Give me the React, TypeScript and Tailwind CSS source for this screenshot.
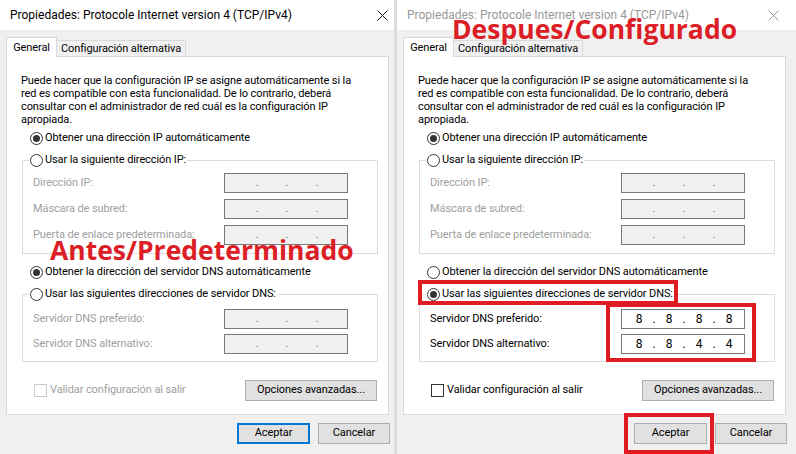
import React from "react";

type Variant = "before" | "after";

function Radio({ checked }: { checked: boolean }) {
  return (
    <span className="flex h-[13px] w-[13px] shrink-0 items-center justify-center rounded-full border border-[#333333] bg-white">
      {checked && <span className="h-[7px] w-[7px] rounded-full bg-[#333333]" />}
    </span>
  );
}

function RadioRow({ checked, label }: { checked: boolean; label: string }) {
  return (
    <span className="flex h-[16px] items-center gap-[2px] whitespace-nowrap text-black">
      <Radio checked={checked} />
      <span>{label}</span>
    </span>
  );
}

function IpField({ value, enabled }: { value?: string[]; enabled: boolean }) {
  return (
    <div
      className={
        enabled
          ? "flex h-[20px] w-[124px] shrink-0 items-center border border-[#7a7a7a] bg-white pl-[4px] text-[12px] text-black"
          : "flex h-[20px] w-[124px] shrink-0 items-center border border-[#7a7a7a] bg-[#f0f0f0] pl-[4px] text-[#6d6d6d]"
      }
    >
      {[0, 1, 2, 3].map((i) => (
        <React.Fragment key={i}>
          {i > 0 && <span className="w-[4px] text-center leading-[18px]">.</span>}
          <span className="w-[26px] text-center leading-[18px]">{value ? value[i] : ""}</span>
        </React.Fragment>
      ))}
    </div>
  );
}

function FieldRow({ label, enabled, value }: { label: string; enabled: boolean; value?: string[] }) {
  return (
    <div className="flex h-[20px] items-center justify-between whitespace-nowrap pl-[10px] pr-[29px]">
      <span className={enabled ? "text-black" : "text-[#a0a0a0]"}>{label}</span>
      <IpField enabled={enabled} value={value} />
    </div>
  );
}

function Dialog({ variant }: { variant: Variant }) {
  const after = variant === "after";
  return (
    <div className={after ? "h-[454px] w-[399px] shrink-0 bg-[#f0f0f0]" : "h-[454px] w-[394px] shrink-0 bg-[#f0f0f0]"}>
      {/* title bar */}
      <div className="flex h-[30px] w-full items-center justify-between bg-white pl-[10px]">
        <span
          className={
            after
              ? "whitespace-nowrap text-[12px] tracking-normal text-[#999999]"
              : "whitespace-nowrap text-[12px] tracking-normal text-black"
          }
        >
          Propiedades: Protocole Internet version 4 (TCP/IPv4)
        </span>
        <svg
          width="11"
          height="11"
          viewBox="0 0 11 11"
          className={after ? "mr-[17px]" : "mr-[6px]"}
          stroke={after ? "#999999" : "#1a1a1a"}
          strokeWidth="1"
        >
          <path d="M0.5 0.5L10.5 10.5M10.5 0.5L0.5 10.5" />
        </svg>
      </div>

      <div className="w-[394px] pt-[7px]">
        {/* tabs */}
        <div className="-mb-px ml-[6px] flex h-[20px] items-end whitespace-nowrap">
          <div className="relative z-10 h-[20px] w-[51px] border border-b-0 border-[#d9d9d9] bg-white text-center leading-[19px] text-black">
            General
          </div>
          <div className="h-[17px] w-[129px] border border-l-0 border-[#d9d9d9] bg-[#f0f0f0] text-center leading-[15px] text-black">
            Configuración alternativa
          </div>
        </div>

        {/* panel */}
        <div className="ml-[6px] flex h-[359px] w-[383px] flex-col border border-[#d9d9d9] bg-white pt-[17px]">
          <p className="whitespace-nowrap pl-[14px] leading-[13px] text-black">
            Puede hacer que la configuración IP se asigne automáticamente si la
            <br />
            red es compatible con esta funcionalidad. De lo contrario, deberá
            <br />
            consultar con el administrador de red cuál es la configuración IP
            <br />
            apropiada.
          </p>

          <div className="ml-[23px] mt-[4px]">
            <RadioRow checked label="Obtener una dirección IP automáticamente" />
          </div>

          <fieldset className="ml-[15px] mt-[6px] w-[356px] border border-[#dcdcdc] pb-[8px]">
            <legend className="ml-[6px] px-[1px]">
              <RadioRow checked={false} label="Usar la siguiente dirección IP:" />
            </legend>
            <div className="mt-[5px] flex flex-col gap-[6px]">
              <FieldRow label="Dirección IP:" enabled={false} />
              <FieldRow label="Máscara de subred:" enabled={false} />
              <FieldRow label="Puerta de enlace predeterminada:" enabled={false} />
            </div>
          </fieldset>

          <div className="ml-[23px] mt-[10px]">
            <RadioRow checked={!after} label="Obtener la dirección del servidor DNS automáticamente" />
          </div>

          <fieldset className="ml-[15px] mt-[6px] w-[356px] border border-[#dcdcdc] pb-[7px]">
            <legend className="ml-[6px] px-[1px]">
              <RadioRow checked={after} label="Usar las siguientes direcciones de servidor DNS:" />
            </legend>
            <div className="mt-[7px] flex flex-col gap-[5px]">
              <FieldRow label="Servidor DNS preferido:" enabled={after} value={after ? ["8", "8", "8", "8"] : undefined} />
              <FieldRow label="Servidor DNS alternativo:" enabled={after} value={after ? ["8", "8", "4", "4"] : undefined} />
            </div>
          </fieldset>

          <div className="mt-[18px] flex h-[21px] items-center justify-between whitespace-nowrap pl-[27px] pr-[11px]">
            <span className="flex items-center gap-[3px]">
              <span
                className={
                  after
                    ? "h-[13px] w-[13px] border border-[#333333] bg-white"
                    : "h-[13px] w-[13px] border border-[#cccccc] bg-white"
                }
              />
              <span className={after ? "text-black" : "text-[#a0a0a0]"}>Validar configuración al salir</span>
            </span>
            <button className="h-[21px] w-[132px] border border-[#adadad] bg-[#e1e1e1] text-black">
              Opciones avanzadas...
            </button>
          </div>
        </div>

        {/* dialog buttons */}
        <div className="mt-[8px] flex justify-end gap-[8px] pr-[4px]">
          <button
            className={
              after
                ? "h-[21px] w-[73px] border border-[#adadad] bg-[#e1e1e1] text-black"
                : "h-[21px] w-[73px] border-2 border-[#0078d7] bg-[#e1e1e1] text-black"
            }
          >
            Aceptar
          </button>
          <button className="h-[21px] w-[72px] border border-[#adadad] bg-[#e1e1e1] text-black">Cancelar</button>
        </div>
      </div>
    </div>
  );
}

export default function App() {
  return (
    <div className="relative flex h-[454px] w-[796px] overflow-hidden bg-white font-['Roboto',sans-serif] text-[11px] tracking-[-0.1px]">
      <Dialog variant="before" />
      <div className="h-[454px] w-[3px] shrink-0 bg-[#dcdcdc]" />
      <Dialog variant="after" />

      {/* annotations drawn over the screenshots */}
      <span className="absolute left-[50px] top-[237px] font-['Open_Sans',sans-serif] text-[26.5px] font-bold leading-none tracking-normal text-[#dc1e26]">
        Antes/Predeterminado
      </span>
      <span className="absolute left-[452px] top-[16px] font-['Open_Sans',sans-serif] text-[26.5px] font-bold leading-none tracking-normal text-[#dc1e26]">
        Despues/Configurado
      </span>
      <div className="absolute left-[418px] top-[280px] h-[25px] w-[260px] border-4 border-[#e01b22]" />
      <div className="absolute left-[606px] top-[303px] h-[59px] w-[150px] border-4 border-[#e01b22]" />
      <div className="absolute left-[624px] top-[413px] h-[41px] w-[90px] border-4 border-[#e01b22]" />
    </div>
  );
}
